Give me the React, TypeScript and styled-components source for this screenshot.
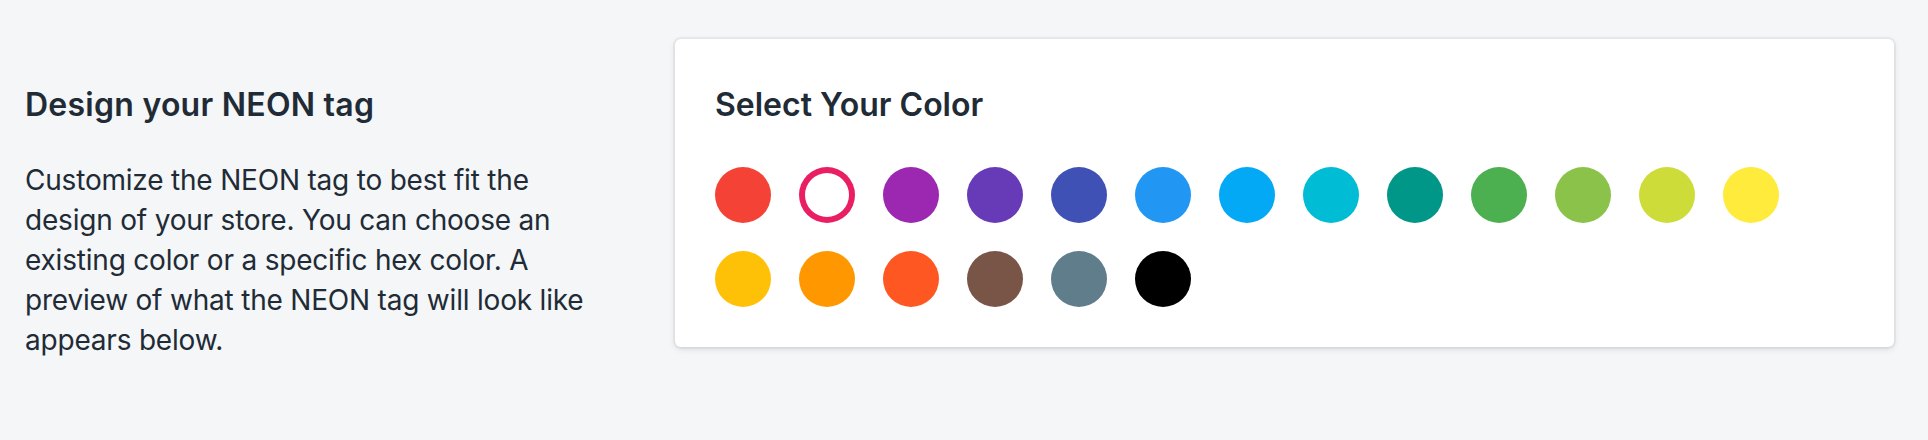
import React from 'react';
import styled, { createGlobalStyle } from 'styled-components';

const GlobalStyle = createGlobalStyle`
  html, body {
    margin: 0;
    padding: 0;
    background: #f4f6f8;
  }
  body {
    font-family: Inter, "Noto Sans", "Liberation Sans", sans-serif;
    color: #212b36;
    -webkit-font-smoothing: antialiased;
  }
`;

const COLORS = [
  '#f44336',
  '#e91e63',
  '#9c27b0',
  '#673ab7',
  '#3f51b5',
  '#2196f3',
  '#03a9f4',
  '#00bcd4',
  '#009688',
  '#4caf50',
  '#8bc34a',
  '#cddc39',
  '#ffeb3b',
  '#ffc107',
  '#ff9800',
  '#ff5722',
  '#795548',
  '#607d8b',
  '#000000',
];

const Page = styled.div`
  display: flex;
  flex-direction: row;
  align-items: flex-start;
  gap: 40px;
  min-height: 440px;
  box-sizing: border-box;
  padding: 39px 34px 0 25px;
  background: #f4f6f8;
`;

const Annotation = styled.div`
  flex: 0 0 610px;
  box-sizing: border-box;
  padding: 42px 40px 0 0;
`;

const Heading = styled.h2<{ $wide?: boolean }>`
  margin: 0;
  font-size: 32px;
  line-height: 48px;
  font-weight: 600;
  letter-spacing: ${(p) => (p.$wide ? '0.25px' : '0')};
  color: #212b36;
`;

const Description = styled.p`
  margin: 31px 0 0;
  font-size: 28px;
  line-height: 40px;
  font-weight: 400;
  letter-spacing: -0.2px;
  color: #212b36;
`;

const Card = styled.div`
  flex: 1 1 auto;
  background: #ffffff;
  border-radius: 6px;
  box-shadow: 0 0 0 2px rgba(63, 63, 68, 0.05),
    0 2px 6px 0 rgba(63, 63, 68, 0.15);
  padding: 42px 40px 40px;
`;

const Swatches = styled.div`
  display: flex;
  flex-wrap: wrap;
  gap: 28px;
  margin-top: 38px;
`;

const Swatch = styled.div<{ $color: string; $selected?: boolean }>`
  width: 56px;
  height: 56px;
  border-radius: 50%;
  cursor: pointer;
  box-shadow: inset 0 0 0 ${(p) => (p.$selected ? '6px' : '29px')}
    ${(p) => p.$color};
`;

const App: React.FC = () => {
  const selected = '#e91e63';
  return (
    <>
      <GlobalStyle />
      <Page>
        <Annotation>
          <Heading $wide>Design your NEON tag</Heading>
          <Description>
            Customize the NEON tag to best fit the design of your store. You
            can choose an existing color or a specific hex color. A preview of
            what the NEON tag will look like appears below.
          </Description>
        </Annotation>
        <Card>
          <Heading>Select Your Color</Heading>
          <Swatches>
            {COLORS.map((color) => (
              <Swatch
                key={color}
                $color={color}
                $selected={color === selected}
              />
            ))}
          </Swatches>
        </Card>
      </Page>
    </>
  );
};

export default App;
